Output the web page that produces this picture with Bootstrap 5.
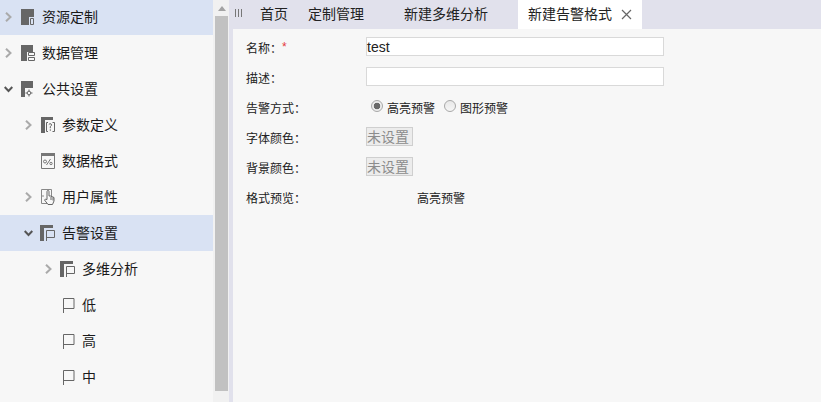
<!DOCTYPE html>
<html lang="zh">
<head>
<meta charset="utf-8">
<title>新建告警格式</title>
<link rel="stylesheet" href="https://cdn.jsdelivr.net/npm/bootstrap@5.3.0/dist/css/bootstrap.min.css">
<style>
html,body{height:402px;overflow:hidden}
body{background:#f7f7f7;color:#222;font:14px/20px "Liberation Sans","Noto Sans CJK SC",sans-serif}
.shell{height:402px}
.side{width:213px;flex:none;overflow:hidden;margin-top:-1px}
.tree-row{height:36px;white-space:nowrap;color:#1a1a1a}
.tree-row.on{background:#d9e2f3}
.lv1{padding-left:20px}.lv2{padding-left:40px}
.chev{width:21px;flex:none;padding-left:5px;display:flex}
.ico{width:21px;flex:none;display:flex}
.sbar{width:16px;flex:none;background:#f1f1f1;padding:0 1px 0 2px}
.sbar-up{height:16px;display:flex;align-items:center;justify-content:center}
.sbar-thumb{height:375px;background:#c1c1c1}
.strip{width:4px;flex:none;background:#e1e1ec}
.tabbar{height:29px;background:#e1e1ec;color:#222;font-size:14px}
.grip{width:27px;flex:none;padding:9px 0 0 2px}
.tab-item{white-space:nowrap;line-height:29px;height:29px}
.t1{width:48px}.t2{width:96px}.t3{width:114px}
.tab-now{background:#fff;width:124px;padding-left:10px;gap:9px}
.frm{padding:8px 0 0 13px;font-size:12px}
.frow{height:30px}
.flabel{width:120px;flex:none;padding-top:2px}
.colon{font-family:"Noto Sans CJK TC",sans-serif;line-height:0}
.star{color:#e4393c;vertical-align:2px;line-height:0}
.tinput{width:298px;height:19px;background:#fff;border:1px solid #d9d9d9;padding:1px 0 0;font-size:14px;line-height:17px;color:#222}
.unset{width:47px;height:19px;border:1px solid #cfcfcf;background:#ececec;color:#8c8c8c;font-size:14px;line-height:17px;padding-top:1px;white-space:nowrap;overflow:hidden}
.radios{padding-left:5px}
.rad{width:12px;height:12px;margin-top:3px;border-radius:50%;border:1px solid #a8a8a8;background:linear-gradient(#e8e8e8,#f6f6f6);flex:none}
.rad.sel{background:radial-gradient(circle,#6a6a6a 0 3px,#ededed 3.6px)}
.rad-txt{padding:2px 9px 0 4px}
.prev{padding:2px 0 0 51px}
</style>
</head>
<body>
<div class="shell d-flex">
  <nav class="side">
    <div class="tree-row on d-flex align-items-center">
      <span class="chev"><svg width="7" height="10" viewBox="0 0 7 10"><path d="M1 .7l4.500 4.300-4.500 4.300" fill="none" stroke="#aaa" stroke-width="2"/></svg></span>
      <span class="ico"><svg width="13" height="16" viewBox="0 0 13 16"><path d="M0 0H13V8H8V16H0Z" fill="#666"/><path d="M9.500 9.500h3v6h-3z" fill="none" stroke="#666"/></svg></span>资源定制</div>
    <div class="tree-row d-flex align-items-center">
      <span class="chev"><svg width="7" height="10" viewBox="0 0 7 10"><path d="M1 .7l4.500 4.300-4.500 4.300" fill="none" stroke="#aaa" stroke-width="2"/></svg></span>
      <span class="ico"><svg width="14" height="16" viewBox="0 0 14 16"><path d="M0 0H12V7H6V16H0Z" fill="#666"/><path d="M7.500 7.500h6v3h-6zM7.500 12.500h6v3h-6z" fill="none" stroke="#666"/></svg></span>数据管理</div>
    <div class="tree-row d-flex align-items-center">
      <span class="chev"><svg width="9" height="7" viewBox="0 0 9 7" style="margin-left:-1px"><path d="M.7 1l3.800 4 3.800-4" fill="none" stroke="#555" stroke-width="2"/></svg></span>
      <span class="ico"><svg width="12" height="16" viewBox="0 0 12 16"><path d="M0 0H12V7H4V16H0Z" fill="#666"/><circle cx="8" cy="12" r="1.800" fill="none" stroke="#666"/><path d="M8 8.500V10M8 14v1.500M4.500 12H6M10 12h1.500" stroke="#666"/></svg></span>公共设置</div>
    <div class="tree-row lv1 d-flex align-items-center">
      <span class="chev"><svg width="7" height="10" viewBox="0 0 7 10"><path d="M1 .7l4.500 4.300-4.500 4.300" fill="none" stroke="#aaa" stroke-width="2"/></svg></span>
      <span class="ico"><svg width="14" height="16" viewBox="0 0 14 16"><path d="M0 0H12V3H4V16H0Z" fill="#666"/><path d="M7 5.500H5.500v9H7M11.500 5.500H13.500v9H11.500" fill="none" stroke="#666"/><path d="M7.800 7.500q1.200-1.500 2.400-.5t-.9 2.700v1.500" fill="none" stroke="#666"/><path d="M9.300 12.300v1.500" stroke="#666"/></svg></span>参数定义</div>
    <div class="tree-row lv1 d-flex align-items-center">
      <span class="chev"></span>
      <span class="ico"><svg width="14" height="16" viewBox="0 0 14 16"><path d="M.5.500h13v15H.500z" fill="none" stroke="#777"/><path d="M0 0h14v3H0z" fill="#777"/><circle cx="4" cy="8.500" r="1.500" fill="none" stroke="#777"/><path d="M5.500 12l4-6" stroke="#777"/><circle cx="10" cy="10.500" r="1.200" fill="none" stroke="#777"/></svg></span>数据格式</div>
    <div class="tree-row lv1 d-flex align-items-center">
      <span class="chev"><svg width="7" height="10" viewBox="0 0 7 10"><path d="M1 .7l4.500 4.300-4.500 4.300" fill="none" stroke="#aaa" stroke-width="2"/></svg></span>
      <span class="ico"><svg width="14" height="16" viewBox="0 0 14 16"><path d="M.5.500h10v14H.500zM.500 7H3" fill="none" stroke="#888"/><path d="M6 9V2.500q0-1 1-1t1 1V7h1.500l3.500 1.500V12l-1.500 3.500H7L3.500 11q.5-1.500 2.500-.5z" fill="#f7f7f7" stroke="#666"/><path d="M10 8v3M12 8.500v3" stroke="#666"/></svg></span>用户属性</div>
    <div class="tree-row lv1 on d-flex align-items-center">
      <span class="chev"><svg width="9" height="7" viewBox="0 0 9 7" style="margin-left:-1px"><path d="M.7 1l3.800 4 3.800-4" fill="none" stroke="#555" stroke-width="2"/></svg></span>
      <span class="ico"><svg width="15" height="16" viewBox="0 0 15 16" style="margin-left:-1px"><path d="M0 0H13V3H4V16H0Z" fill="#666"/><path d="M6.500 16V5.500h8V12.500H7" fill="none" stroke="#666"/></svg></span>告警设置</div>
    <div class="tree-row lv2 d-flex align-items-center">
      <span class="chev"><svg width="7" height="10" viewBox="0 0 7 10"><path d="M1 .7l4.500 4.300-4.500 4.300" fill="none" stroke="#aaa" stroke-width="2"/></svg></span>
      <span class="ico"><svg width="15" height="16" viewBox="0 0 15 16" style="margin-left:-1px"><path d="M0 0H13V3H4V16H0Z" fill="#666"/><path d="M6.500 16V5.500h8V12.500H7" fill="none" stroke="#666"/></svg></span>多维分析</div>
    <div class="tree-row lv2 d-flex align-items-center">
      <span class="chev"></span>
      <span class="ico"><svg width="12" height="15" viewBox="0 0 12 15" style="margin-left:2px"><path d="M.5 15V.5h10.500v10H1" fill="none" stroke="#666"/></svg></span>低</div>
    <div class="tree-row lv2 d-flex align-items-center">
      <span class="chev"></span>
      <span class="ico"><svg width="12" height="15" viewBox="0 0 12 15" style="margin-left:2px"><path d="M.5 15V.5h10.500v10H1" fill="none" stroke="#666"/></svg></span>高</div>
    <div class="tree-row lv2 d-flex align-items-center">
      <span class="chev"></span>
      <span class="ico"><svg width="12" height="15" viewBox="0 0 12 15" style="margin-left:2px"><path d="M.5 15V.5h10.500v10H1" fill="none" stroke="#666"/></svg></span>中</div>
  </nav>
  <div class="sbar">
    <div class="sbar-up"><svg width="8" height="5" viewBox="0 0 8 5"><path d="M0 5L4 0l4 5z" fill="#a3a3a3"/></svg></div>
    <div class="sbar-thumb"></div>
  </div>
  <div class="strip"></div>
  <main class="flex-grow-1">
    <div class="tabbar d-flex">
      <div class="grip d-flex align-items-start"><svg width="8" height="8" viewBox="0 0 8 8"><path d="M.5 0v8M3.500 0v8M6.500 0v8" stroke="#777"/></svg></div>
      <div class="tab-item t1">首页</div>
      <div class="tab-item t2">定制管理</div>
      <div class="tab-item t3">新建多维分析</div>
      <div class="tab-item tab-now d-flex align-items-center"><span>新建告警格式</span><svg width="11" height="11" viewBox="0 0 11 11"><path d="M1 1l9 9M10 1l-9 9" stroke="#666" stroke-width="1.200"/></svg></div>
    </div>
    <form class="frm">
      <div class="frow d-flex align-items-start"><span class="flabel">名称<span class="colon">：</span><span class="star">*</span></span><div class="tinput">test</div></div>
      <div class="frow d-flex align-items-start"><span class="flabel">描述<span class="colon">：</span></span><div class="tinput"></div></div>
      <div class="frow d-flex align-items-start"><span class="flabel">告警方式<span class="colon">：</span></span>
        <div class="radios d-flex align-items-start"><div class="rad sel"></div><span class="rad-txt">高亮预警</span><div class="rad"></div><span class="rad-txt">图形预警</span></div></div>
      <div class="frow d-flex align-items-start"><span class="flabel">字体颜色<span class="colon">：</span></span><div class="unset">未设置</div></div>
      <div class="frow d-flex align-items-start"><span class="flabel">背景颜色<span class="colon">：</span></span><div class="unset">未设置</div></div>
      <div class="frow d-flex align-items-start"><span class="flabel">格式预览<span class="colon">：</span></span><span class="prev">高亮预警</span></div>
    </form>
  </main>
</div>
</body>
</html>
